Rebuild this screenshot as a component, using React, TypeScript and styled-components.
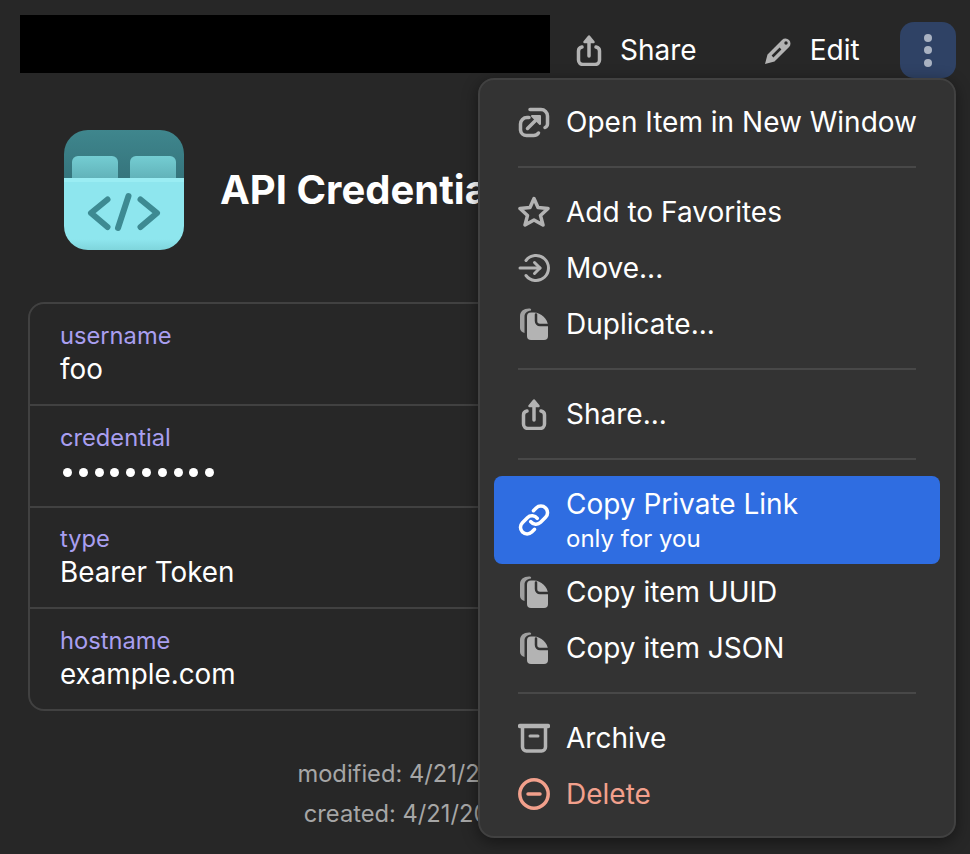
import styled, { createGlobalStyle } from 'styled-components';
import { ReactElement, ReactNode } from 'react';

const GlobalStyle = createGlobalStyle`
  html, body {
    margin: 0;
    padding: 0;
    background: #272727;
  }
  body {
    font-family: Inter, "Liberation Sans", sans-serif;
    color: #fff;
  }
`;

const Page = styled.div`
  width: 970px;
  height: 854px;
  overflow: hidden;
  background: #272727;
`;

const Header = styled.header`
  display: flex;
  align-items: flex-start;
  padding: 15px 14px 0 20px;
`;

const Redacted = styled.div`
  flex: none;
  width: 530px;
  height: 58px;
  background: #000;
`;

const Actions = styled.div`
  flex: 1;
  display: flex;
  align-items: center;
  gap: 24px;
  padding: 7px 0 0 7px;
`;

const ToolButton = styled.button`
  display: flex;
  align-items: center;
  gap: 15px;
  height: 56px;
  padding: 0 16px;
  border: 0;
  background: none;
  color: #fff;
  font: 400 28px Inter, sans-serif;
  & + & {
    margin-left: 10px;
  }
`;

const MenuAnchor = styled.div`
  position: relative;
  margin-left: auto;
`;

const KebabButton = styled.button`
  display: flex;
  flex-direction: column;
  align-items: center;
  justify-content: center;
  gap: 4.5px;
  width: 56px;
  height: 56px;
  padding: 0;
  border: 0;
  border-radius: 14px;
  background: #2f4265;
`;

const Dot = styled.span`
  width: 8px;
  height: 8px;
  border-radius: 50%;
  background: #a9b2c2;
`;

const Menu = styled.div`
  position: absolute;
  top: 56px;
  right: 0;
  box-sizing: border-box;
  width: 478px;
  height: 760px;
  padding: 14px;
  border: 2px solid #414141;
  border-radius: 16px;
  background: #333;
  box-shadow: 0 4px 16px rgba(0, 0, 0, 0.45);
`;

const MenuItem = styled.div`
  display: flex;
  align-items: center;
  gap: 16px;
  padding: 0 24px;
  border-radius: 8px;
  font-size: 28px;
  white-space: nowrap;
  color: ${(p) => (p.$danger ? '#f2a08c' : '#fff')};
  background: ${(p) => (p.$active ? '#2f6de1' : 'transparent')};
  height: ${(p) => (p.$active ? '88px' : '56px')};
`;

const MenuIcon = styled.span`
  flex: none;
  display: flex;
  width: 32px;
  height: 32px;
  color: ${(p) => (p.$danger ? '#f2a08c' : p.$active ? '#fff' : '#b3b3b3')};
`;

const ItemText = styled.div`
  display: flex;
  flex-direction: column;
  padding-top: 3px;
`;

const ItemTitle = styled.span`
  line-height: 34px;
`;

const ItemSub = styled.span`
  margin-top: 1px;
  font-size: 24px;
  line-height: 34px;
`;

const Separator = styled.div`
  height: 2px;
  margin: 16px 24px;
  background: #484848;
`;

const Main = styled.main`
  padding: 52px 28px 0;
`;

const TitleRow = styled.div`
  display: flex;
  align-items: center;
  gap: 36px;
  padding-left: 36px;
  margin-bottom: 52px;
`;

const Title = styled.h1`
  margin: 0;
  font-size: 40px;
  font-weight: 700;
  line-height: 48px;
  white-space: nowrap;
`;

const Card = styled.section`
  border: 2px solid #414141;
  border-radius: 16px;
`;

const Field = styled.div`
  box-sizing: border-box;
  height: 100px;
  padding: 15.5px 30px 0;
  & + & {
    height: 101.5px;
    padding-top: 15.5px;
    border-top: 2px solid #414141;
  }
`;

const FieldLabel = styled.div`
  font-size: 23.7px;
  line-height: 32px;
  color: #a99ff0;
`;

const FieldValue = styled.div`
  font-size: 27.8px;
  line-height: 34px;
  color: #fff;
`;

const Masked = styled(FieldValue)`
  display: flex;
  align-items: center;
  gap: 6.8px;
  height: 34px;
  margin-top: 2px;
  padding-left: 3px;
`;

const MaskDot = styled.span`
  width: 9px;
  height: 9px;
  border-radius: 50%;
  background: #fff;
`;

const Meta = styled.div`
  margin-top: 43px;
  text-align: center;
  font-size: 23.7px;
  line-height: 40px;
  color: #a6a6a6;
`;

const ToolIcon = styled.span`
  display: flex;
  color: #b3b3b3;
`;

const Svg = ({ children, fill, width = 3, box = '0 0 32 32' }: { children: ReactNode; fill?: boolean; width?: number; box?: string }): ReactElement => (
  <svg width="32" height="32" viewBox={box} fill={fill ? 'currentColor' : 'none'} stroke={fill ? 'none' : 'currentColor'} strokeWidth={width} strokeLinecap="round" strokeLinejoin="round">
    {children}
  </svg>
);

const ShareIcon = () => (
  <Svg width={3.5}>
    <path d="M9 13C6.500 13.500 5.500 15 5.500 17v9a4.500 4.500 0 0 0 4.500 4.500h12a4.500 4.500 0 0 0 4.500-4.500v-9c0-2-1-3.500-3.500-4" />
    <path d="M16 22V6" />
    <path d="M16 2.500 20.500 8h-9z" fill="currentColor" strokeWidth="2.500" />
  </Svg>
);

const PencilIcon = () => (
  <Svg fill>
    <path
      fillRule="evenodd"
      d="M2 30 4.500 20.500 19 6a5 5 0 0 1 7.070 7.070L11.500 27.500zM8.600 21.600 10.400 23.400 18.400 15.400 16.600 13.600zM21.300 9a1.700 1.700 0 1 0 3.400 0 1.700 1.700 0 1 0-3.400 0z"
    />
  </Svg>
);

const OpenIcon = () => (
  <Svg width={3.5}>
    <path d="M12 3.500h11a6.500 6.500 0 0 1 6.500 6.500v8a4 4 0 0 1-2.500 3.500" />
    <path d="M11 11.500H9A6.500 6.500 0 0 0 2.500 18v6a6 6 0 0 0 6 5.500h7a6 6 0 0 0 5-2.500" />
    <path d="M9.500 22.500 19 13" />
    <path d="M14 10h8v8z" fill="currentColor" strokeWidth="2" />
  </Svg>
);

const StarIcon = () => (
  <Svg width={3.5}>
    <path d="M16 2.500 20 11.500 30 12.500 22.500 19.500 25 29 16 24 7 29 9.500 19.500 2 12.500 12 11.500z" />
  </Svg>
);

const MoveIcon = () => (
  <Svg>
    <path d="M8 8.500a12.500 12.500 0 1 1 0 15" />
    <path d="M2 16h20" />
    <path d="M16.500 10.500 22 16l-5.500 5.500" />
  </Svg>
);

const CopyIcon = () => (
  <Svg fill>
    <path opacity="0.85" d="M11 .5C5.500 .5 2 3.500 2 8v12c0 2.500 2 4.500 4.500 5V8.500C6.500 5 9 3 13 2.500 13.500 1 12.500 .5 11 .5z" />
    <path d="M13 4.500h3C23 4.500 30 11 30 18v10a4 4 0 0 1-4 4H13a4 4 0 0 1-4-4V8.500a4 4 0 0 1 4-4z" />
    <path d="M18 6.500V13a4 4 0 0 0 4 4h8" fill="none" stroke="#333" strokeWidth="2.500" />
  </Svg>
);

const LinkIcon = () => (
  <Svg width={3.2} box="1.500 1.500 29 29">
    <path d="M13 17.500a6 6 0 0 0 9 .6l4.500-4.500a6 6 0 0 0-8.500-8.500l-2.500 2.500" />
    <path d="M19 14.500a6 6 0 0 0-9-.6l-4.500 4.500a6 6 0 0 0 8.500 8.500l2.500-2.500" />
  </Svg>
);

const ArchiveIcon = () => (
  <Svg width={3.5}>
    <path d="M2 4h28" strokeWidth="4.500" />
    <path d="M4.500 5v20a4 4 0 0 0 4 4h15a4 4 0 0 0 4-4V5" />
    <path d="M12 14h8" strokeWidth="3" />
  </Svg>
);

const DeleteIcon = () => (
  <Svg width={3.5}>
    <circle cx="16" cy="16" r="14.200" />
    <path d="M10 16h12" />
  </Svg>
);

const AppIcon = () => (
  <svg width="120" height="120" viewBox="0 0 120 120">
    <defs>
      <linearGradient id="back" x1="0" y1="0" x2="0" y2="1">
        <stop offset="0" stopColor="#3f868d" />
        <stop offset="1" stopColor="#35747c" />
      </linearGradient>
      <linearGradient id="tab" x1="0" y1="0" x2="0" y2="1">
        <stop offset="0" stopColor="#74cdd2" />
        <stop offset="1" stopColor="#62b3ba" />
      </linearGradient>
      <linearGradient id="front" x1="0" y1="0" x2="0" y2="1">
        <stop offset="0" stopColor="#8ee6ee" />
        <stop offset="0.85" stopColor="#8ee6ee" />
        <stop offset="1" stopColor="#7fd5dc" />
      </linearGradient>
      <clipPath id="rounded">
        <rect width="120" height="120" rx="24" />
      </clipPath>
    </defs>
    <g clipPath="url(#rounded)">
      <rect width="120" height="50" fill="url(#back)" />
      <path d="M8 48V32a6 6 0 0 1 6-6h34a6 6 0 0 1 6 6v16z" fill="url(#tab)" />
      <path d="M66 48V32a6 6 0 0 1 6-6h34a6 6 0 0 1 6 6v16z" fill="url(#tab)" />
      <rect y="48" width="120" height="72" fill="url(#front)" />
      <rect y="48" width="120" height="4" fill="#9aedf3" />
    </g>
    <g fill="none" stroke="#3d8a92" strokeWidth="6" strokeLinecap="round" strokeLinejoin="round">
      <path d="M43.500 69.500 27 83l16.500 14" />
      <path d="M76.500 69.500 93 83 76.500 97" />
      <path d="M64.500 66 54 98" />
    </g>
  </svg>
);

const fields = [
  { label: 'username', value: 'foo' },
  { label: 'credential', value: null },
  { label: 'type', value: 'Bearer Token' },
  { label: 'hostname', value: 'example.com' },
];

export default function App(): ReactElement {
  return (
    <Page>
      <GlobalStyle />
      <Header>
        <Redacted />
        <Actions>
          <ToolButton>
            <ToolIcon><ShareIcon /></ToolIcon>
            Share
          </ToolButton>
          <ToolButton>
            <ToolIcon><PencilIcon /></ToolIcon>
            Edit
          </ToolButton>
          <MenuAnchor>
            <KebabButton>
              <Dot />
              <Dot />
              <Dot />
            </KebabButton>
            <Menu>
              <MenuItem><MenuIcon><OpenIcon /></MenuIcon>Open Item in New Window</MenuItem>
              <Separator />
              <MenuItem><MenuIcon><StarIcon /></MenuIcon>Add to Favorites</MenuItem>
              <MenuItem><MenuIcon><MoveIcon /></MenuIcon>Move...</MenuItem>
              <MenuItem><MenuIcon><CopyIcon /></MenuIcon>Duplicate...</MenuItem>
              <Separator />
              <MenuItem><MenuIcon><ShareIcon /></MenuIcon>Share...</MenuItem>
              <Separator />
              <MenuItem $active>
                <MenuIcon $active><LinkIcon /></MenuIcon>
                <ItemText>
                  <ItemTitle>Copy Private Link</ItemTitle>
                  <ItemSub>only for you</ItemSub>
                </ItemText>
              </MenuItem>
              <MenuItem><MenuIcon><CopyIcon /></MenuIcon>Copy item UUID</MenuItem>
              <MenuItem><MenuIcon><CopyIcon /></MenuIcon>Copy item JSON</MenuItem>
              <Separator />
              <MenuItem><MenuIcon><ArchiveIcon /></MenuIcon>Archive</MenuItem>
              <MenuItem $danger><MenuIcon $danger><DeleteIcon /></MenuIcon>Delete</MenuItem>
            </Menu>
          </MenuAnchor>
        </Actions>
      </Header>
      <Main>
        <TitleRow>
          <AppIcon />
          <Title>API Credentials</Title>
        </TitleRow>
        <Card>
          {fields.map((f) => (
            <Field key={f.label}>
              <FieldLabel>{f.label}</FieldLabel>
              {f.value ? (
                <FieldValue>{f.value}</FieldValue>
              ) : (
                <Masked>
                  {Array.from({ length: 10 }, (_, i) => <MaskDot key={i} />)}
                </Masked>
              )}
            </Field>
          ))}
        </Card>
        <Meta>
          <div>modified: 4/21/2024, 10:32:15 AM</div>
          <div>created: 4/21/2024, 10:32:15 AM</div>
        </Meta>
      </Main>
    </Page>
  );
}
